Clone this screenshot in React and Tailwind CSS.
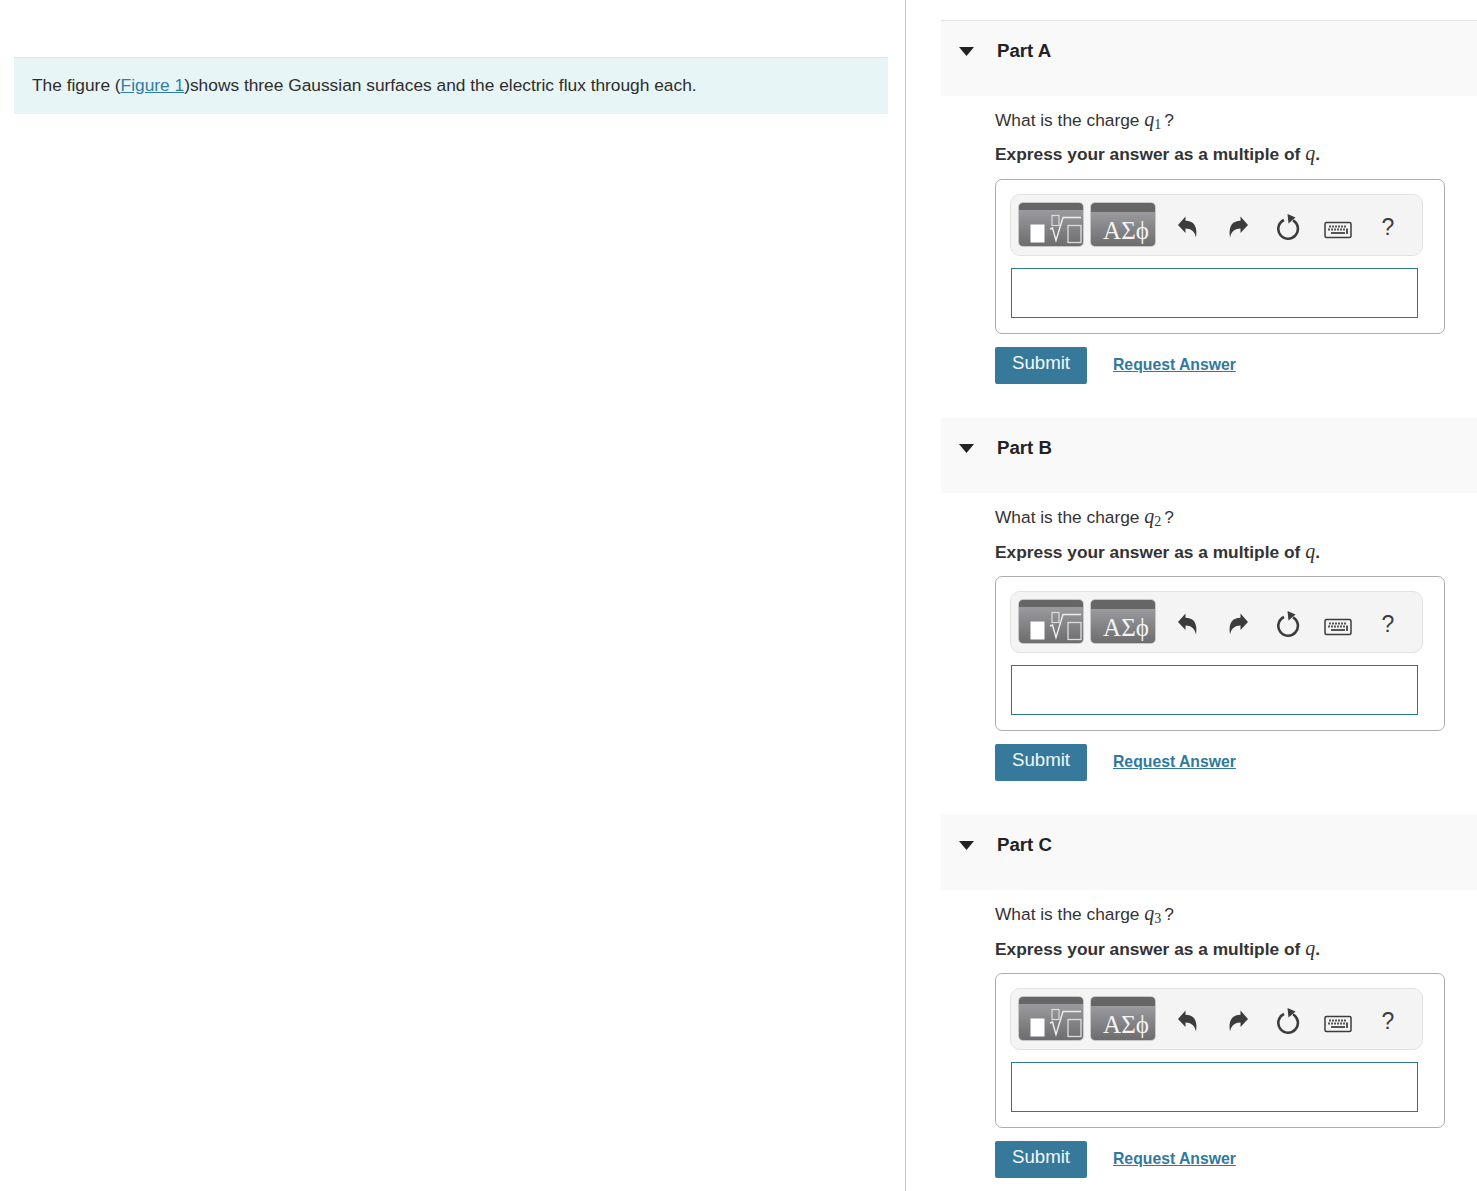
const sans = "font-['Liberation_Sans',Arial,sans-serif]";

function UndoIcon({ flip }) {
  return (
    <svg width="24" height="26" viewBox="0 0 24 26" className={flip ? "-scale-x-100" : ""}>
      <path
        d="M2 11 L9.5 2.5 V6.8 C17 6.8 22 11.5 20 23.5 C18.8 17.5 15 14.5 9.5 14.5 V19 Z"
        fill="#3c3c3c"
      />
    </svg>
  );
}

function ReloadIcon() {
  return (
    <svg width="26" height="28" viewBox="0 0 26 28">
      <path
        d="M9 8 A9.8 9.8 0 1 0 18 8.4"
        fill="none"
        stroke="#3c3c3c"
        strokeWidth="2.6"
      />
      <path d="M12.5 2 L20.5 5.5 L13.5 11.5 Z" fill="#3c3c3c" />
    </svg>
  );
}

function KeyboardIcon() {
  const rows = [
    [5, 8, 11, 14, 17, 20],
    [4, 7, 10, 13, 16, 19, 22],
  ];
  return (
    <svg width="28" height="18" viewBox="0 0 28 18">
      <rect x="1" y="1.5" width="26" height="15" rx="1.5" fill="#f4f4f4" stroke="#3c3c3c" strokeWidth="1.5" />
      {rows.map((row, i) =>
        row.map((x) => (
          <rect key={`${i}-${x}`} x={x} y={4.5 + i * 3} width="2" height="2" fill="#555" />
        ))
      )}
      <rect x="7" y="11" width="14" height="2" fill="#555" />
      <rect x="22" y="8" width="2" height="5" fill="#555" />
    </svg>
  );
}

function ToolButton({ children }) {
  return (
    <div className="w-[66px] h-[45px] rounded-[5px] border border-[#c8c8c8] overflow-hidden flex flex-col shrink-0">
      <div className="h-[9px] bg-[#666666]" />
      <div className="flex-1 bg-linear-to-b from-[#9b9b9f] to-[#6d6d6f] flex items-center justify-center">
        {children}
      </div>
    </div>
  );
}

function Toolbar() {
  return (
    <div className="h-[62px] w-[413px] rounded-[10px] border border-[#e2e2e2] bg-[#f4f4f4] flex items-center pl-[7px]">
      <div className="flex gap-[6px] -mt-[1px]">
        <ToolButton>
          {/* template + root glyph */}
          <svg width="64" height="36" viewBox="0 0 64 36">
            <rect x="11.5" y="14.5" width="14" height="18" fill="#fff" />
            <rect x="33" y="5.5" width="7" height="10" fill="none" stroke="#ddd" strokeWidth="1.2" />
            <path d="M31 19 L33.5 18 L37 30.5 L44 7.5 H62" fill="none" stroke="#eee" strokeWidth="1.4" />
            <rect x="49" y="15.5" width="13" height="17" fill="none" stroke="#ddd" strokeWidth="1.3" />
          </svg>
        </ToolButton>
        <ToolButton>
          <span className="font-['Liberation_Serif',serif] text-[25px] leading-none text-[#f2f2f2] mt-[2px] ml-[6px]">
            ΑΣϕ
          </span>
        </ToolButton>
      </div>
      <div className="flex items-center ml-[7px]">
        <div className="w-[50px] flex justify-center pt-[4px]"><UndoIcon /></div>
        <div className="w-[50px] flex justify-center pt-[4px]"><UndoIcon flip /></div>
        <div className="w-[50px] flex justify-center pt-[2px]"><ReloadIcon /></div>
        <div className="w-[50px] flex justify-center pt-[9px]"><KeyboardIcon /></div>
        <div className="w-[50px] flex justify-center text-[23px] leading-none text-[#3c3c3c] pt-[5px]">?</div>
      </div>
    </div>
  );
}

function Part({ name, sub, first }) {
  return (
    <section className="mb-[33px]">
      <div className={`h-[76px] border-t ${first ? "border-[#e2e2e2]" : "border-white"} bg-[#f9f9f9] flex items-start pl-[18px] pt-[18px]`}>
        <svg width="15" height="9" viewBox="0 0 15 9" className="mt-[8px] shrink-0">
          <path d="M0 0 H15 L7.5 9 Z" fill="#222222" />
        </svg>
        <h2 className="ml-[23px] text-[18.67px] leading-[24px] font-bold text-[#222222]">Part {name}</h2>
      </div>

      <div className="pl-[54px] pr-[32px]">
        <p className="mt-[11px] h-[24px] text-[17.33px] leading-[24px] text-[#333333]">
          What is the charge{" "}
          <span className="font-['Liberation_Serif',serif] italic text-[20px]">q</span>
          <sub className="font-['Liberation_Serif',serif] text-[14px] bottom-[-3px]">{sub}</sub>
          <span className="ml-[3px]">?</span>
        </p>
        <p className={`${first ? "mt-[10px]" : "mt-[11px]"} h-[24px] text-[17.33px] leading-[24px] font-bold text-[#333333]`}>
          Express your answer as a multiple of{" "}
          <span className="font-['Liberation_Serif',serif] italic font-normal text-[20px]">q</span>.
        </p>

        <div className={`${first ? "mt-[14px]" : "mt-[13px]"} h-[155px] rounded-[7px] border border-[#adadad] pt-[14px] pl-[14px]`}>
          <Toolbar />
          <div className="mt-[12px] ml-[1px] h-[50px] w-[407px] border border-[#2f7393] bg-white" />
        </div>

        <div className="mt-[13px] flex items-center">
          <button className="w-[92px] h-[37px] rounded-[2px] bg-[#37799b] text-[#f4f8fa] text-[18.67px] leading-none pb-[4px]">
            Submit
          </button>
          <a href="#" className="ml-[26px] -mt-[2px] text-[15.75px] font-bold text-[#2f7a9e] underline">
            Request Answer
          </a>
        </div>
      </div>
    </section>
  );
}

export default function App() {
  return (
    <div className={`${sans} flex h-screen overflow-hidden bg-white`}>
      <div className="w-[906px] shrink-0 border-r border-[#c4c4c4] pt-[57px] pl-[14px] pr-[17px]">
        <div className="h-[57px] border-t border-[#e0e0e0] bg-[#e8f5f6] pl-[18px] pt-[15px] text-[17.33px] leading-[24px] text-[#2d2d2d]">
          The figure (<a href="#" className="text-[#2f7fa3] underline">Figure 1</a>)shows three Gaussian surfaces and the electric flux through each.
        </div>
      </div>
      <div className="flex-1 pl-[35px] pt-[20px]">
        <Part name="A" sub="1" first />
        <Part name="B" sub="2" />
        <Part name="C" sub="3" />
      </div>
    </div>
  );
}
